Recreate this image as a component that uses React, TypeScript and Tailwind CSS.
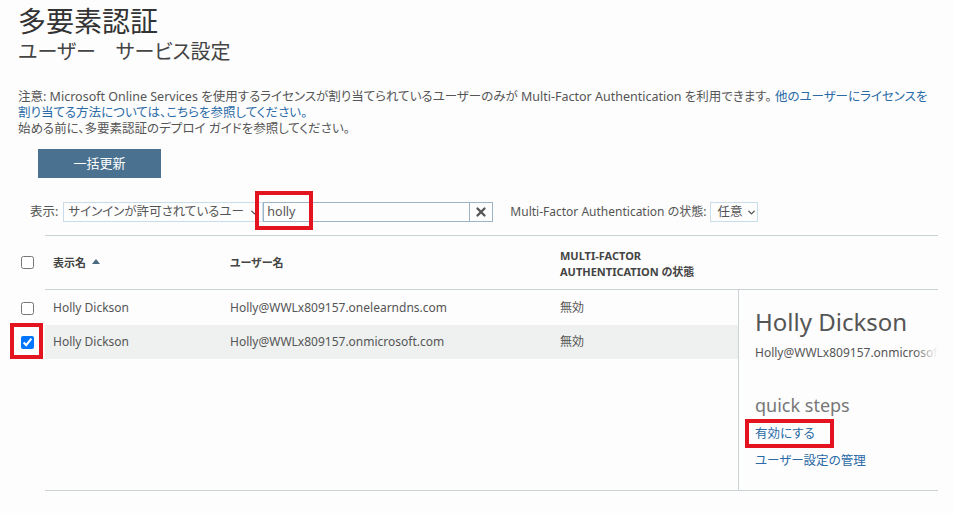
import { X, ChevronDown } from 'lucide-react'

const font = "font-['Noto_Sans','Noto_Sans_CJK_JP',sans-serif] [font-feature-settings:'palt']"

const rows = [
  { name: 'Holly Dickson', user: 'Holly@WWLx809157.onelearndns.com', state: '無効', checked: false },
  { name: 'Holly Dickson', user: 'Holly@WWLx809157.onmicrosoft.com', state: '無効', checked: true },
]

function RedBox({ className }: { className: string }) {
  return <div className={`pointer-events-none absolute border-4 border-[#e3141f] ${className}`} />
}

export default function App() {
  return (
    <div className={`${font} relative h-[513px] w-[953px] overflow-hidden bg-[#fdfdfd] text-[#555]`}>
      <div className="pl-[18px] pt-[3px]">
        <h1 className="text-[28px] leading-[36px] text-[#333]">多要素認証</h1>
        <h2 className="text-[20px] leading-[26px] text-[#444]">ユーザー　サービス設定</h2>
      </div>

      <p className="mt-[24px] whitespace-nowrap pl-[18px] text-[12.5px] leading-[16px] text-[#555]">
        注意: Microsoft Online Services を使用するライセンスが割り当てられているユーザーのみが Multi-Factor Authentication を利用できます。{' '}
        <span className="text-[#2a6aa6]">他のユーザーにライセンスを</span>
        <br />
        <span className="text-[#2a6aa6]">割り当てる方法については、こちらを参照してください。</span>
        <br />
        始める前に、多要素認証のデプロイ ガイドを参照してください。
      </p>

      <button className="ml-[38px] mt-[12px] flex h-[29px] w-[123px] items-center justify-center bg-[#4a7190] text-[13px] text-white">
        一括更新
      </button>

      {/* filter row */}
      <div className="relative mt-[24px] flex h-[20px] items-center whitespace-nowrap pl-[30px] text-[12.5px]">
        <span className="mr-[5px]">表示:</span>
        <div className="flex h-[20px] w-[200px] items-center border border-[#c9dcea] pl-[4px] pr-[2px]">
          <span className="flex-1 overflow-hidden whitespace-nowrap">サインインが許可されているユー</span>
          <ChevronDown size={11} strokeWidth={3} className="shrink-0 text-[#555]" />
        </div>
        <div className="flex h-[20px] w-[230px] border border-[#9db3c6]">
          <span className="flex-1 pl-[3px] leading-[18px] text-[#555]">holly</span>
          <span className="flex w-[23px] items-center justify-center border-l border-[#9db3c6]">
            <X size={14} strokeWidth={4} className="text-[#555]" />
          </span>
        </div>
        <span className="ml-[17px] mr-[4px] text-[12px]">Multi-Factor Authentication の状態:</span>
        <div className="flex h-[20px] w-[48px] shrink-0 items-center gap-[4px] border border-[#c9dcea] pl-[6px]">
          <span>任意</span>
          <ChevronDown size={11} strokeWidth={3} className="text-[#555]" />
        </div>
        <RedBox className="left-[255px] top-[-11px] h-[39px] w-[58px]" />
      </div>

      {/* header */}
      <div className="mt-[13px] flex w-[938px]">
        <div className="flex w-[45px] items-center pl-[21px]">
          <input type="checkbox" readOnly className="m-0 h-[13px] w-[13px]" />
        </div>
        <div className="flex h-[55px] flex-1 items-center border-y border-[#cbd3d7] text-[11px] font-bold leading-[16px] text-[#444]">
          <div className="flex w-[185px] items-center gap-[4px] pl-[8px]">
            表示名
            <svg width="8" height="5" viewBox="0 0 8 5" className="ml-[2px] mt-[-2px]">
              <path d="M0 5 L4 0 L8 5 Z" fill="#4a6a80" />
            </svg>
          </div>
          <div className="w-[330px]">ユーザー名</div>
          <div className="mt-[2px]">
            MULTI-FACTOR
            <br />
            AUTHENTICATION の状態
          </div>
        </div>
      </div>

      {/* body */}
      <div className="flex w-[938px]">
        <div className="w-[738px] pt-[1px]">
          {rows.map((r, i) => (
            <div key={i} className="flex h-[34px] text-[12px]">
              <div className="relative flex w-[45px] items-center pl-[21px]">
                <input type="checkbox" readOnly checked={r.checked} className="m-0 h-[13px] w-[13px] accent-[#0075ff]" />
                {r.checked && <RedBox className="left-[10px] top-[-2px] h-[36px] w-[33px]" />}
              </div>
              <div className={`flex flex-1 items-center ${r.checked ? 'bg-[#eef1f0]' : ''}`}>
                <span className="w-[185px] pl-[8px]">{r.name}</span>
                <span className="w-[330px]">{r.user}</span>
                <span>{r.state}</span>
              </div>
            </div>
          ))}
        </div>
        <div className="h-[200px] w-[200px] border-l border-[#cbd3d7] pl-[16px]">
          <div className="mt-[16px] text-[24px] leading-[32px] text-[#555]">Holly Dickson</div>
          <div className="relative mt-[6px] overflow-hidden whitespace-nowrap text-[12px] text-[#555]">
            Holly@WWLx809157.onmicrosoft.com
            <div className="absolute inset-y-0 right-0 w-[24px] bg-gradient-to-r from-transparent to-[#fdfdfd]" />
          </div>
          <div className="mt-[31px] text-[18px] leading-[24px] text-[#777]">quick steps</div>
          <div className="relative mt-[8px] text-[12.5px] leading-[18px] text-[#2a6aa6]">
            有効にする
            <RedBox className="left-[-10px] top-[-6px] h-[29px] w-[89px]" />
          </div>
          <div className="mt-[9px] text-[12.5px] leading-[18px] text-[#2a6aa6]">ユーザー設定の管理</div>
        </div>
      </div>
      <div className="ml-[45px] w-[893px] border-t border-[#cbd3d7]" />
    </div>
  )
}
